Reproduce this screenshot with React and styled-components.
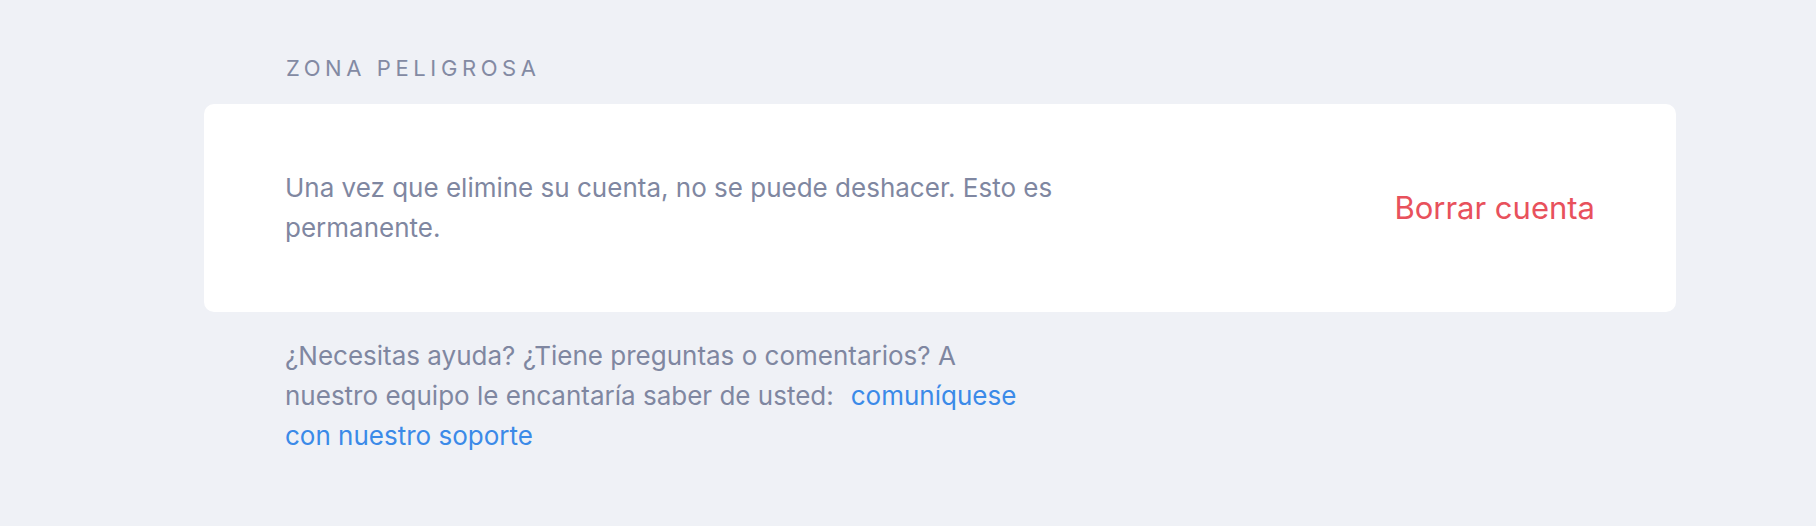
import styled, { createGlobalStyle } from "styled-components";

const GlobalStyle = createGlobalStyle`
  html, body {
    margin: 0;
    padding: 0;
    background: #eff1f6;
  }
  body {
    font-family: Inter, "Noto Sans", sans-serif;
    -webkit-font-smoothing: antialiased;
  }
`;

const Page = styled.div`
  padding: 52px 140px 60px 204px;
  min-height: 526px;
  box-sizing: border-box;
`;

const SectionTitle = styled.h2`
  margin: 0 0 20px 82px;
  font-size: 22px;
  font-weight: 400;
  line-height: 32px;
  letter-spacing: 4.6px;
  text-transform: uppercase;
  color: #838aa3;
`;

const Card = styled.div`
  display: flex;
  align-items: center;
  justify-content: space-between;
  gap: 40px;
  height: 208px;
  padding: 0 81px;
  box-sizing: border-box;
  background: #ffffff;
  border-radius: 10px;
`;

const Text = styled.p`
  margin: 0;
  max-width: ${(p) => p.$width}px;
  font-size: 26px;
  line-height: 40px;
  color: #7f87a1;
`;

const DangerButton = styled.button`
  border: 0;
  padding: 0;
  background: none;
  cursor: pointer;
  font-family: inherit;
  font-size: 31px;
  line-height: 40px;
  color: #e8515c;
`;

const Help = styled.div`
  padding: 24px 81px 0;
`;

const Link = styled.a`
  color: #3b8ae8;
  text-decoration: none;
  margin-left: 17px;
`;

export default function App() {
  return (
    <>
      <GlobalStyle />
      <Page>
        <SectionTitle>Zona peligrosa</SectionTitle>
        <Card>
          <Text $width={800}>
            Una vez que elimine su cuenta, no se puede deshacer. Esto es
            permanente.
          </Text>
          <DangerButton type="button">Borrar cuenta</DangerButton>
        </Card>
        <Help>
          <Text $width={740}>
            ¿Necesitas ayuda? ¿Tiene preguntas o comentarios? A nuestro equipo
            le encantaría saber de usted:
            <Link href="#">comuníquese con nuestro soporte</Link>
          </Text>
        </Help>
      </Page>
    </>
  );
}
